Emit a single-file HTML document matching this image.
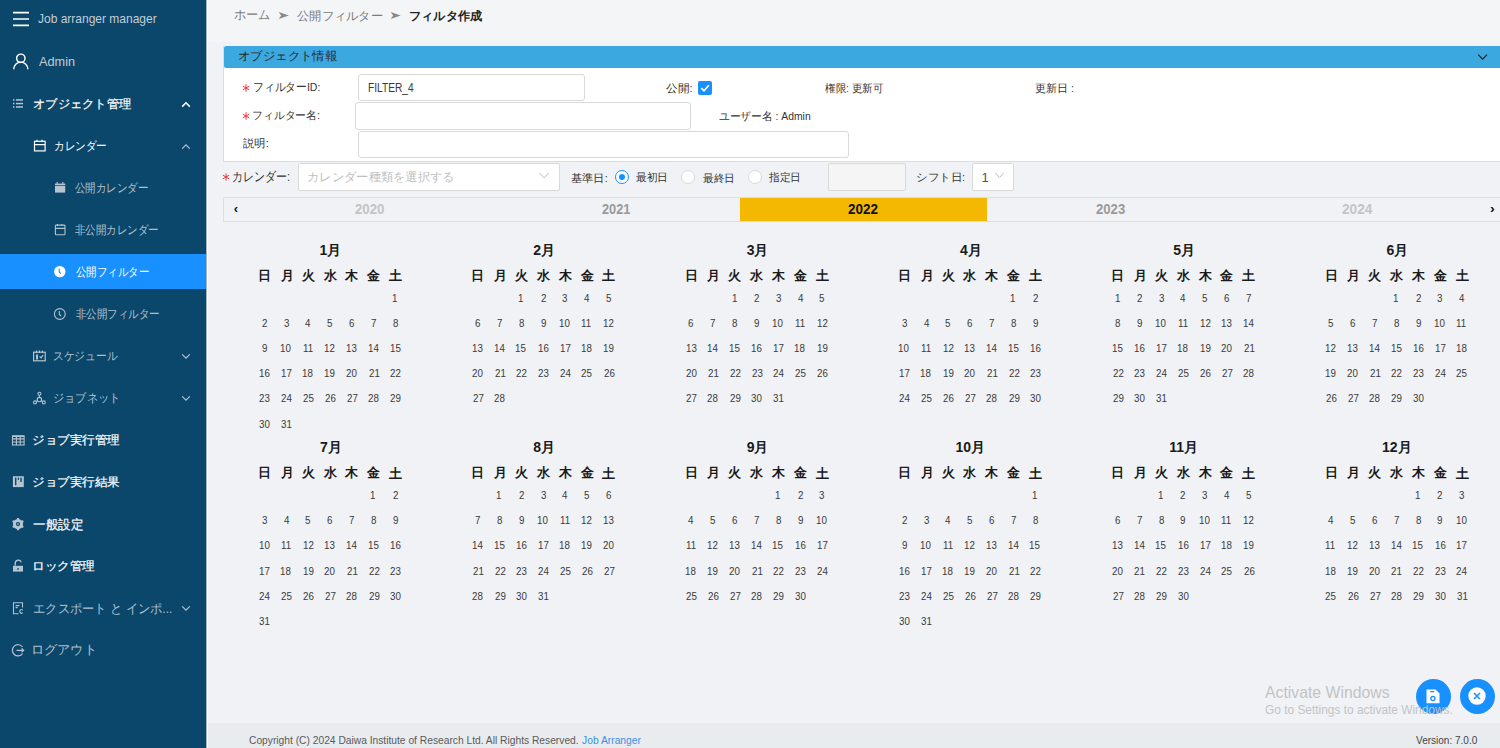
<!DOCTYPE html>
<html><head><meta charset="utf-8"><title>フィルタ作成</title><style>
*{margin:0;padding:0;box-sizing:border-box}
html,body{width:1500px;height:748px;overflow:hidden;background:#f0f2f5;font-family:'Liberation Sans',sans-serif}
.t{position:absolute;line-height:1;white-space:nowrap;transform-origin:0 0}
.b{position:absolute}
svg{position:absolute;overflow:visible}
</style></head>
<body>
<div class=b style="left:0px;top:0px;width:206px;height:748px;background:#0b466b"></div>
<div class=b style="left:206px;top:0px;width:1px;height:748px;background:#9fb3c3"></div>
<div class=b style="left:207px;top:0px;width:1px;height:748px;background:#ffffff"></div>
<div class=b style="left:0px;top:254px;width:206px;height:35px;background:#1890ff"></div>
<div class=b style="left:208px;top:0px;width:1292px;height:42px;background:#f4f5f7"></div>
<div class=b style="left:223px;top:46px;width:1277px;height:116px;background:#fff;border-left:1px solid #dcdcdc;border-bottom:1px solid #dcdcdc"></div>
<div class=b style="left:224px;top:46px;width:1276px;height:22px;background:#3ba8e0;border-radius:2px 0 0 2px"></div>
<div class=b style="left:358px;top:74px;width:227px;height:27px;background:#fff;border:1px solid #d9d9d9;border-radius:3px"></div>
<div class=b style="left:354.5px;top:102px;width:336.0px;height:28px;background:#fff;border:1px solid #d9d9d9;border-radius:3px"></div>
<div class=b style="left:358px;top:130.5px;width:490.5px;height:27.5px;background:#fff;border:1px solid #d9d9d9;border-radius:3px"></div>
<div class=b style="left:698px;top:81px;width:14px;height:14px;background:#1890ff;border-radius:2px"></div>
<div class=b style="left:297.5px;top:163px;width:262.5px;height:27.5px;background:#fff;border:1px solid #d9d9d9;border-radius:2px"></div>
<div class=b style="left:827.5px;top:163px;width:78.5px;height:27.5px;background:#f5f5f5;border:1px solid #d9d9d9;border-radius:2px"></div>
<div class=b style="left:971.5px;top:163px;width:42.5px;height:27.5px;background:#fff;border:1px solid #d9d9d9;border-radius:2px"></div>
<div class=b style="left:614.5px;top:169.5px;width:14.0px;height:14.0px;background:#fff;border:1px solid #1890ff;border-radius:50%"></div>
<div class=b style="left:618.5px;top:173.5px;width:6.0px;height:6.0px;background:#1890ff;border-radius:50%"></div>
<div class=b style="left:681px;top:169.5px;width:14px;height:14.0px;background:#fff;border:1px solid #d9d9d9;border-radius:50%"></div>
<div class=b style="left:747.5px;top:169.5px;width:14.0px;height:14.0px;background:#fff;border:1px solid #d9d9d9;border-radius:50%"></div>
<div class=b style="left:223px;top:197px;width:1277px;height:25px;background:#f0f2f5;border-top:1px solid #dedede;border-bottom:1px solid #dedede;border-left:1px solid #dedede"></div>
<div class=b style="left:740px;top:198px;width:247px;height:23px;background:#f4b800"></div>
<div class=b style="left:208px;top:723px;width:1292px;height:25px;background:#e9ecef"></div>
<div class=b style="left:1415.5px;top:678.5px;width:35.0px;height:35.0px;background:#1890ff;border-radius:50%"></div>
<div class=b style="left:1459.5px;top:678.5px;width:35.0px;height:35.0px;background:#1890ff;border-radius:50%"></div>
<svg style="left:12px;top:10px" width="18" height="18" viewBox="0 0 18 18"><g stroke="#ffffff" stroke-width="1.6"><path d="M1 2.6H17M1 9H17M1 15.4H17"/></g></svg>
<svg style="left:12px;top:52px" width="18" height="18" viewBox="0 0 18 18"><g fill="none" stroke="#ffffff" stroke-width="1.4"><circle cx="8.8" cy="6.3" r="4.2"/><path d="M1.7 17.2A7.1 7.1 0 0 1 15.9 17.2"/></g></svg>
<svg style="left:12px;top:97px" width="14" height="12" viewBox="0 0 14 12"><g fill="#b4c4d1"><rect x="1" y="2.2" width="1.5" height="1.5"/><rect x="1" y="5.8" width="1.5" height="1.5"/><rect x="1" y="9.2" width="1.5" height="1.5"/><rect x="4" y="2.2" width="7" height="1.5"/><rect x="4" y="5.8" width="7" height="1.5"/><rect x="4" y="9.2" width="7" height="1.5"/></g></svg>
<svg style="left:180px;top:100px" width="12" height="9" viewBox="0 0 12 9"><path d="M2.2 6.6L6 2.8L9.8 6.6" fill="none" stroke="#ffffff" stroke-width="1.6"/></svg>
<svg style="left:33px;top:139px" width="14" height="14" viewBox="0 0 14 14"><g fill="none" stroke="#ffffff" stroke-width="1.2"><rect x="1.5" y="2.3" width="10.6" height="9.6"/><path d="M1.5 5.7H12.1M4 0.8V3M9.1 0.8V3"/></g></svg>
<svg style="left:180px;top:142px" width="12" height="9" viewBox="0 0 12 9"><path d="M2.2 6.6L6 2.8L9.8 6.6" fill="none" stroke="#b4c4d1" stroke-width="1.2"/></svg>
<svg style="left:54px;top:181px" width="12" height="13" viewBox="0 0 12 13"><g fill="#b4c4d1"><rect x="1" y="2.6" width="10.2" height="9"/><rect x="2.5" y="1.2" width="1.5" height="1.6"/><rect x="8" y="1.2" width="1.5" height="1.6"/></g><rect x="1" y="4.2" width="10.2" height="0.7" fill="#0b466b"/></svg>
<svg style="left:54px;top:223px" width="12" height="13" viewBox="0 0 12 13"><g fill="none" stroke="#b4c4d1" stroke-width="1.1"><rect x="1.4" y="2.1" width="9.6" height="9.6" rx="0.8"/><path d="M1.4 5.4H11M3.6 0.9V3M7.9 0.9V3"/></g></svg>
<svg style="left:53px;top:265px" width="14" height="14" viewBox="0 0 14 14"><circle cx="6.8" cy="6.6" r="5.7" fill="#ffffff"/><path d="M6.2 3.6V7L8 8.6" fill="none" stroke="#1890ff" stroke-width="1.1"/></svg>
<svg style="left:53px;top:307px" width="14" height="14" viewBox="0 0 14 14"><circle cx="6.8" cy="7" r="5.4" fill="none" stroke="#b4c4d1" stroke-width="1.1"/><path d="M6.3 4V7.4L8.1 9" fill="none" stroke="#b4c4d1" stroke-width="1.1"/></svg>
<svg style="left:32px;top:350px" width="15" height="13" viewBox="0 0 15 13"><g fill="none" stroke="#b4c4d1" stroke-width="1.2"><rect x="1.6" y="2.2" width="11.6" height="8.6"/><path d="M4.5 0.6V3M7.4 0.6V3M10.3 0.6V3M7.6 6.4L9 7.8L11 5.2"/></g><rect x="4" y="4.5" width="2" height="5" fill="#b4c4d1"/></svg>
<svg style="left:32px;top:391px" width="15" height="15" viewBox="0 0 15 15"><g fill="none" stroke="#b4c4d1" stroke-width="1.1"><circle cx="7.4" cy="2.8" r="1.5"/><circle cx="7.4" cy="8.6" r="2.2"/><circle cx="3" cy="11.4" r="1.5"/><circle cx="11.8" cy="11.4" r="1.5"/><path d="M7.4 4.3V6.4M5.5 9.8L4.2 10.6M9.3 9.8L10.6 10.6"/></g></svg>
<svg style="left:180px;top:352px" width="12" height="9" viewBox="0 0 12 9"><path d="M2.2 2.4L6 6.2L9.8 2.4" fill="none" stroke="#b4c4d1" stroke-width="1.2"/></svg>
<svg style="left:180px;top:394px" width="12" height="9" viewBox="0 0 12 9"><path d="M2.2 2.4L6 6.2L9.8 2.4" fill="none" stroke="#b4c4d1" stroke-width="1.2"/></svg>
<svg style="left:180px;top:604px" width="12" height="9" viewBox="0 0 12 9"><path d="M2.2 2.4L6 6.2L9.8 2.4" fill="none" stroke="#b4c4d1" stroke-width="1.2"/></svg>
<svg style="left:11px;top:434px" width="15" height="13" viewBox="0 0 15 13"><g fill="none" stroke="#b4c4d1" stroke-width="1.1"><rect x="1.5" y="1.8" width="11.6" height="9.2"/><path d="M1.5 4.9H13.1M1.5 8H13.1M5.4 1.8V11M9.2 1.8V11"/></g><rect x="1.5" y="1.8" width="11.6" height="1.2" fill="#b4c4d1"/></svg>
<svg style="left:12px;top:475px" width="13" height="13" viewBox="0 0 13 13"><rect x="0.9" y="1.2" width="10.9" height="10.9" fill="#b4c4d1"/><rect x="3" y="2.6" width="1.4" height="7.6" fill="#0b466b"/><rect x="5.8" y="2.6" width="1.2" height="2.4" fill="#0b466b"/><rect x="8.3" y="2.6" width="1.4" height="4.4" fill="#0b466b"/></svg>
<svg style="left:12px;top:518px" width="13" height="13" viewBox="0 0 13 13"><polygon points="6.00,-0.10 6.81,-0.05 7.29,1.27 7.91,1.48 8.50,1.77 9.04,2.13 9.54,2.56 10.92,2.33 11.37,3.00 11.73,3.73 10.83,4.81 10.96,5.45 11.00,6.10 10.96,6.75 10.83,7.39 11.73,8.47 11.37,9.20 10.92,9.87 9.54,9.64 9.04,10.07 8.50,10.43 7.91,10.72 7.29,10.93 6.81,12.25 6.00,12.30 5.19,12.25 4.71,10.93 4.09,10.72 3.50,10.43 2.96,10.07 2.46,9.64 1.08,9.87 0.63,9.20 0.27,8.47 1.17,7.39 1.04,6.75 1.00,6.10 1.04,5.45 1.17,4.81 0.27,3.73 0.63,3.00 1.08,2.33 2.46,2.56 2.96,2.13 3.50,1.77 4.09,1.48 4.71,1.27 5.19,-0.05" fill="#b4c4d1"/><circle cx="6" cy="6.1" r="2.1" fill="#0b466b"/><circle cx="6" cy="6.1" r="0.9" fill="#b4c4d1"/></svg>
<svg style="left:12px;top:559px" width="13" height="14" viewBox="0 0 13 14"><path d="M3.2 6.8V4.2A3.1 3.1 0 0 1 9.2 3.2" fill="none" stroke="#b4c4d1" stroke-width="1.3"/><rect x="1" y="6.8" width="10" height="5.8" fill="#b4c4d1"/><rect x="5.2" y="9.2" width="1.6" height="1.4" fill="#0b466b"/></svg>
<svg style="left:12px;top:601px" width="13" height="15" viewBox="0 0 13 15"><g fill="none" stroke="#b4c4d1" stroke-width="1.1"><path d="M6.5 12.7H1.5V1.8H10.5V6.5"/><path d="M3.6 4.6H7.4M3.6 6.6H5.6"/><path d="M10.8 9.1A1.8 1.8 0 1 0 10.8 11.7"/></g></svg>
<svg style="left:11px;top:643px" width="15" height="15" viewBox="0 0 15 15"><g fill="none" stroke="#b4c4d1" stroke-width="1.2"><path d="M11.5 4A5.6 5.6 0 1 0 11.5 10.6"/><path d="M5.5 7.3H12.5M10.6 5.4L12.6 7.3L10.6 9.2"/></g></svg>
<svg style="left:235.9px;top:77.5px" width="20" height="20" viewBox="0 0 20 20"><path d="M10.00 6.70L10.00 13.30M7.14 8.35L12.86 11.65M7.14 11.65L12.86 8.35" stroke="#f5222d" stroke-width="0.9" stroke-linecap="round"/></svg>
<svg style="left:235.9px;top:105.5px" width="20" height="20" viewBox="0 0 20 20"><path d="M10.00 6.70L10.00 13.30M7.14 8.35L12.86 11.65M7.14 11.65L12.86 8.35" stroke="#f5222d" stroke-width="0.9" stroke-linecap="round"/></svg>
<svg style="left:216.2px;top:167px" width="20" height="20" viewBox="0 0 20 20"><path d="M10.00 6.70L10.00 13.30M7.14 8.35L12.86 11.65M7.14 11.65L12.86 8.35" stroke="#f5222d" stroke-width="0.9" stroke-linecap="round"/></svg>
<svg style="left:1476px;top:52px" width="14" height="10" viewBox="0 0 14 10"><path d="M2.2 2.6L6.6 7.2L11 2.6" fill="none" stroke="#222" stroke-width="1.15"/></svg>
<svg style="left:698px;top:81px" width="14" height="14" viewBox="0 0 14 14"><path d="M3.3 7.2L6 9.8L10.8 4.3" fill="none" stroke="#fff" stroke-width="1.7"/></svg>
<svg style="left:538px;top:171px" width="13" height="10" viewBox="0 0 13 10"><path d="M1.6 2L6.1 7L10.6 2" fill="none" stroke="#bfbfbf" stroke-width="1"/></svg>
<svg style="left:994px;top:171px" width="12" height="10" viewBox="0 0 12 10"><path d="M1.5 2L5.5 6.7L9.5 2" fill="none" stroke="#bfbfbf" stroke-width="1"/></svg>
<svg style="left:1424px;top:688px" width="18" height="17" viewBox="0 0 18 17"><path d="M2.5 1.5H11.5L15.5 5.5V15.2H2.5Z" fill="#fff"/><rect x="6.2" y="3" width="4" height="1.3" fill="#1890ff"/><circle cx="8.9" cy="10.6" r="2.1" fill="none" stroke="#1890ff" stroke-width="1.3"/></svg>
<svg style="left:1466px;top:685px" width="22" height="22" viewBox="0 0 22 22"><circle cx="11" cy="11" r="8.7" fill="#fff"/><path d="M8 8L14 14M14 8L8 14" stroke="#1890ff" stroke-width="1.5"/></svg>
<div class=t style="left:38.40px;top:12.45px;font-size:13px;font-weight:400;color:#c3cdd6;transform:scaleX(0.9225);">Job arranger manager</div>
<div class=t style="left:38.80px;top:55.00px;font-size:13px;font-weight:400;color:#c3cdd6;transform:scaleX(0.9778);">Admin</div>
<div class=t style="left:32.68px;top:98.00px;font-size:12.49px;font-weight:400;color:#ffffff;transform:scaleX(1.0242);-webkit-text-stroke:0.2px #fff;">オブジェクト管理</div>
<div class=t style="left:54.02px;top:141.00px;font-size:11.96px;font-weight:400;color:#ffffff;transform:scaleX(0.8810);">カレンダー</div>
<div class=t style="left:75.40px;top:183.00px;font-size:11.5px;font-weight:400;color:rgba(255,255,255,0.68);transform:scaleX(0.8747);">公開カレンダー</div>
<div class=t style="left:75.40px;top:224.50px;font-size:11.5px;font-weight:400;color:rgba(255,255,255,0.68);transform:scaleX(0.8747);">非公開カレンダー</div>
<div class=t style="left:75.80px;top:266.85px;font-size:11.5px;font-weight:400;color:#ffffff;transform:scaleX(0.8699);">公開フィルター</div>
<div class=t style="left:75.80px;top:309.00px;font-size:11.5px;font-weight:400;color:rgba(255,255,255,0.68);transform:scaleX(0.8737);">非公開フィルター</div>
<div class=t style="left:53.11px;top:349.50px;font-size:12.4px;font-weight:400;color:rgba(255,255,255,0.68);transform:scaleX(0.8944);">スケジュール</div>
<div class=t style="left:52.83px;top:393.20px;font-size:11.96px;font-weight:400;color:rgba(255,255,255,0.68);transform:scaleX(0.9373);">ジョブネット</div>
<div class=t style="left:31.61px;top:435.30px;font-size:11.96px;font-weight:400;color:#ffffff;transform:scaleX(1.0427);-webkit-text-stroke:0.2px #fff;">ジョブ実行管理</div>
<div class=t style="left:31.61px;top:476.00px;font-size:12.49px;font-weight:400;color:#ffffff;transform:scaleX(1.0427);-webkit-text-stroke:0.2px #fff;">ジョブ実行結果</div>
<div class=t style="left:32.73px;top:519.05px;font-size:12.54px;font-weight:400;color:#ffffff;transform:scaleX(0.9660);-webkit-text-stroke:0.2px #fff;">一般設定</div>
<div class=t style="left:31.60px;top:560.25px;font-size:12.23px;font-weight:400;color:#ffffff;transform:scaleX(1.0500);-webkit-text-stroke:0.2px #fff;">ロック管理</div>
<div class=t style="left:32.76px;top:602.60px;font-size:12.89px;font-weight:400;color:rgba(255,255,255,0.68);transform:scaleX(0.9432);">エクスポート と インポ...</div>
<div class=t style="left:31.38px;top:644.40px;font-size:12.56px;font-weight:400;color:rgba(255,255,255,0.68);transform:scaleX(1.0100);">ログアウト</div>
<div class=t style="left:234.20px;top:9.25px;font-size:12.58px;font-weight:400;color:#7b7b7b;transform:scaleX(0.9421);">ホーム</div>
<div class=t style="left:277.26px;top:10.45px;font-size:11px;font-weight:400;color:#8a8a8a;transform:scaleX(1.3375);">➤</div>
<div class=t style="left:297.00px;top:10.80px;font-size:11.96px;font-weight:400;color:#7b7b7b;transform:scaleX(1.0241);">公開フィルター</div>
<div class=t style="left:389.48px;top:10.45px;font-size:11px;font-weight:400;color:#8a8a8a;transform:scaleX(1.3250);">➤</div>
<div class=t style="left:408.99px;top:10.80px;font-size:11.96px;font-weight:700;color:#222;transform:scaleX(1.0141);">フィルタ作成</div>
<div class=t style="left:237.57px;top:51.25px;font-size:11.96px;font-weight:400;color:#2a2a2a;transform:scaleX(1.0330);">オブジェクト情報</div>
<div class=t style="left:252.50px;top:81.10px;font-size:11.67px;font-weight:400;color:#333;transform:scaleX(0.8986);">フィルターID:</div>
<div class=t style="left:252.41px;top:110.10px;font-size:11.17px;font-weight:400;color:#333;transform:scaleX(0.9866);">フィルター名:</div>
<div class=t style="left:243.00px;top:137.70px;font-size:11.04px;font-weight:400;color:#333;transform:scaleX(1.0333);">説明:</div>
<div class=t style="left:367.75px;top:82.20px;font-size:12px;font-weight:400;color:#3a3a3a;transform:scaleX(0.8491);">FILTER_4</div>
<div class=t style="left:666.00px;top:82.85px;font-size:10.58px;font-weight:400;color:#333;transform:scaleX(1.0625);">公開:</div>
<div class=t style="left:824.70px;top:83.20px;font-size:10.58px;font-weight:400;color:#333;transform:scaleX(0.9550);">権限: 更新可</div>
<div class=t style="left:1035.00px;top:83.00px;font-size:10.58px;font-weight:400;color:#333;">更新日 :</div>
<div class=t style="left:718.70px;top:110.90px;font-size:10.6px;font-weight:400;color:#333;transform:scaleX(0.9766);">ユーザー名 : Admin</div>
<div class=t style="left:232.15px;top:171.25px;font-size:12.73px;font-weight:400;color:#333;transform:scaleX(0.8463);">カレンダー:</div>
<div class=t style="left:306.97px;top:171.15px;font-size:12.42px;font-weight:400;color:#bfbfbf;transform:scaleX(1.0254);">カレンダー種類を選択する</div>
<div class=t style="left:571.28px;top:172.50px;font-size:10.58px;font-weight:400;color:#333;transform:scaleX(1.0206);">基準日:</div>
<div class=t style="left:636.00px;top:172.10px;font-size:10.58px;font-weight:400;color:#333;transform:scaleX(0.9677);">最初日</div>
<div class=t style="left:702.70px;top:172.60px;font-size:10.58px;font-weight:400;color:#333;transform:scaleX(0.9677);">最終日</div>
<div class=t style="left:769.40px;top:172.10px;font-size:10.58px;font-weight:400;color:#333;transform:scaleX(0.9710);">指定日</div>
<div class=t style="left:916.25px;top:172.25px;font-size:10.58px;font-weight:400;color:#333;transform:scaleX(1.0467);">シフト日:</div>
<div class=t style="left:981.60px;top:170.75px;font-size:13px;font-weight:400;color:#555;">1</div>
<div class=t style="left:233.70px;top:201.50px;font-size:13px;font-weight:700;color:#111;">‹</div>
<div class=t style="left:355.00px;top:202.00px;font-size:14px;font-weight:700;color:#c4c4c4;transform:scaleX(0.9452);">2020</div>
<div class=t style="left:602.30px;top:202.00px;font-size:14px;font-weight:700;color:#9a9a9a;transform:scaleX(0.9097);">2021</div>
<div class=t style="left:848.40px;top:202.00px;font-size:14px;font-weight:700;color:#111;transform:scaleX(0.9613);">2022</div>
<div class=t style="left:1095.50px;top:202.00px;font-size:14px;font-weight:700;color:#9a9a9a;transform:scaleX(0.9387);">2023</div>
<div class=t style="left:1342.00px;top:202.00px;font-size:14px;font-weight:700;color:#c4c4c4;transform:scaleX(0.9742);">2024</div>
<div class=t style="left:1489.60px;top:202.05px;font-size:13px;font-weight:700;color:#111;transform:scaleX(1.1000);">›</div>
<div class=t style="left:249.30px;top:734.80px;font-size:11px;font-weight:400;color:#5a5a5a;transform:scaleX(0.9312);">Copyright (C) 2024 Daiwa Institute of Research Ltd. All Rights Reserved.</div>
<div class=t style="left:581.70px;top:734.80px;font-size:11px;font-weight:400;color:#3d8fe0;transform:scaleX(0.9365);">Job Arranger</div>
<div class=t style="left:1416.00px;top:735.20px;font-size:11px;font-weight:400;color:#444;transform:scaleX(0.9104);">Version: 7.0.0</div>
<div class=t style="left:1265.30px;top:685.20px;font-size:16px;font-weight:400;color:#c3c3c5;transform:scaleX(0.9865);">Activate Windows</div>
<div class=t style="left:1265.30px;top:703.85px;font-size:12px;font-weight:400;color:#c3c3c5;transform:scaleX(0.9915);">Go to Settings to activate Windows.</div>
<div class=t style="left:319.55px;top:243.10px;font-size:14px;font-weight:700;color:#1a1a1a;">1月</div>
<div class=t style="left:258.06px;top:268.70px;font-size:13px;font-weight:700;color:#1a1a1a;">日</div>
<div class=t style="left:280.89px;top:268.70px;font-size:13px;font-weight:700;color:#1a1a1a;">月</div>
<div class=t style="left:301.72px;top:268.70px;font-size:13px;font-weight:700;color:#1a1a1a;">火</div>
<div class=t style="left:323.55px;top:268.70px;font-size:13px;font-weight:700;color:#1a1a1a;">水</div>
<div class=t style="left:345.38px;top:268.70px;font-size:13px;font-weight:700;color:#1a1a1a;">木</div>
<div class=t style="left:367.21px;top:268.70px;font-size:13px;font-weight:700;color:#1a1a1a;">金</div>
<div class=t style="left:389.04px;top:269.20px;font-size:13px;font-weight:700;color:#1a1a1a;">土</div>
<div class=t style="left:392.29px;top:292.50px;font-size:10.5px;font-weight:400;color:#3a3a3a;transform:scaleX(0.93);">1</div>
<div class=t style="left:261.77px;top:317.70px;font-size:10.5px;font-weight:400;color:#3a3a3a;transform:scaleX(0.93);">2</div>
<div class=t style="left:283.60px;top:317.70px;font-size:10.5px;font-weight:400;color:#3a3a3a;transform:scaleX(0.93);">3</div>
<div class=t style="left:305.43px;top:317.70px;font-size:10.5px;font-weight:400;color:#3a3a3a;transform:scaleX(0.93);">4</div>
<div class=t style="left:327.26px;top:317.70px;font-size:10.5px;font-weight:400;color:#3a3a3a;transform:scaleX(0.93);">5</div>
<div class=t style="left:349.09px;top:317.70px;font-size:10.5px;font-weight:400;color:#3a3a3a;transform:scaleX(0.93);">6</div>
<div class=t style="left:370.92px;top:317.70px;font-size:10.5px;font-weight:400;color:#3a3a3a;transform:scaleX(0.93);">7</div>
<div class=t style="left:392.75px;top:317.70px;font-size:10.5px;font-weight:400;color:#3a3a3a;transform:scaleX(0.93);">8</div>
<div class=t style="left:261.77px;top:342.90px;font-size:10.5px;font-weight:400;color:#3a3a3a;transform:scaleX(0.93);">9</div>
<div class=t style="left:280.34px;top:342.90px;font-size:10.5px;font-weight:400;color:#3a3a3a;transform:scaleX(0.93);">10</div>
<div class=t style="left:302.64px;top:342.90px;font-size:10.5px;font-weight:400;color:#3a3a3a;transform:scaleX(0.93);">11</div>
<div class=t style="left:324.47px;top:342.90px;font-size:10.5px;font-weight:400;color:#3a3a3a;transform:scaleX(0.93);">12</div>
<div class=t style="left:346.30px;top:342.90px;font-size:10.5px;font-weight:400;color:#3a3a3a;transform:scaleX(0.93);">13</div>
<div class=t style="left:367.67px;top:342.90px;font-size:10.5px;font-weight:400;color:#3a3a3a;transform:scaleX(0.93);">14</div>
<div class=t style="left:389.50px;top:342.90px;font-size:10.5px;font-weight:400;color:#3a3a3a;transform:scaleX(0.93);">15</div>
<div class=t style="left:258.98px;top:368.10px;font-size:10.5px;font-weight:400;color:#3a3a3a;transform:scaleX(0.93);">16</div>
<div class=t style="left:280.81px;top:368.10px;font-size:10.5px;font-weight:400;color:#3a3a3a;transform:scaleX(0.93);">17</div>
<div class=t style="left:302.18px;top:368.10px;font-size:10.5px;font-weight:400;color:#3a3a3a;transform:scaleX(0.93);">18</div>
<div class=t style="left:324.47px;top:368.10px;font-size:10.5px;font-weight:400;color:#3a3a3a;transform:scaleX(0.93);">19</div>
<div class=t style="left:346.30px;top:368.10px;font-size:10.5px;font-weight:400;color:#3a3a3a;transform:scaleX(0.93);">20</div>
<div class=t style="left:368.60px;top:368.10px;font-size:10.5px;font-weight:400;color:#3a3a3a;transform:scaleX(0.93);">21</div>
<div class=t style="left:390.43px;top:368.10px;font-size:10.5px;font-weight:400;color:#3a3a3a;transform:scaleX(0.93);">22</div>
<div class=t style="left:259.44px;top:393.30px;font-size:10.5px;font-weight:400;color:#3a3a3a;transform:scaleX(0.93);">23</div>
<div class=t style="left:280.81px;top:393.30px;font-size:10.5px;font-weight:400;color:#3a3a3a;transform:scaleX(0.93);">24</div>
<div class=t style="left:302.64px;top:393.30px;font-size:10.5px;font-weight:400;color:#3a3a3a;transform:scaleX(0.93);">25</div>
<div class=t style="left:324.94px;top:393.30px;font-size:10.5px;font-weight:400;color:#3a3a3a;transform:scaleX(0.93);">26</div>
<div class=t style="left:346.76px;top:393.30px;font-size:10.5px;font-weight:400;color:#3a3a3a;transform:scaleX(0.93);">27</div>
<div class=t style="left:368.13px;top:393.30px;font-size:10.5px;font-weight:400;color:#3a3a3a;transform:scaleX(0.93);">28</div>
<div class=t style="left:390.43px;top:393.30px;font-size:10.5px;font-weight:400;color:#3a3a3a;transform:scaleX(0.93);">29</div>
<div class=t style="left:258.98px;top:418.50px;font-size:10.5px;font-weight:400;color:#3a3a3a;transform:scaleX(0.93);">30</div>
<div class=t style="left:281.27px;top:418.50px;font-size:10.5px;font-weight:400;color:#3a3a3a;transform:scaleX(0.93);">31</div>
<div class=t style="left:533.35px;top:243.10px;font-size:14px;font-weight:700;color:#1a1a1a;">2月</div>
<div class=t style="left:471.36px;top:268.70px;font-size:13px;font-weight:700;color:#1a1a1a;">日</div>
<div class=t style="left:494.19px;top:268.70px;font-size:13px;font-weight:700;color:#1a1a1a;">月</div>
<div class=t style="left:515.02px;top:268.70px;font-size:13px;font-weight:700;color:#1a1a1a;">火</div>
<div class=t style="left:536.85px;top:268.70px;font-size:13px;font-weight:700;color:#1a1a1a;">水</div>
<div class=t style="left:558.68px;top:268.70px;font-size:13px;font-weight:700;color:#1a1a1a;">木</div>
<div class=t style="left:580.51px;top:268.70px;font-size:13px;font-weight:700;color:#1a1a1a;">金</div>
<div class=t style="left:602.34px;top:269.20px;font-size:13px;font-weight:700;color:#1a1a1a;">土</div>
<div class=t style="left:518.26px;top:292.50px;font-size:10.5px;font-weight:400;color:#3a3a3a;transform:scaleX(0.93);">1</div>
<div class=t style="left:540.56px;top:292.50px;font-size:10.5px;font-weight:400;color:#3a3a3a;transform:scaleX(0.93);">2</div>
<div class=t style="left:562.39px;top:292.50px;font-size:10.5px;font-weight:400;color:#3a3a3a;transform:scaleX(0.93);">3</div>
<div class=t style="left:584.22px;top:292.50px;font-size:10.5px;font-weight:400;color:#3a3a3a;transform:scaleX(0.93);">4</div>
<div class=t style="left:606.05px;top:292.50px;font-size:10.5px;font-weight:400;color:#3a3a3a;transform:scaleX(0.93);">5</div>
<div class=t style="left:475.07px;top:317.70px;font-size:10.5px;font-weight:400;color:#3a3a3a;transform:scaleX(0.93);">6</div>
<div class=t style="left:496.90px;top:317.70px;font-size:10.5px;font-weight:400;color:#3a3a3a;transform:scaleX(0.93);">7</div>
<div class=t style="left:518.73px;top:317.70px;font-size:10.5px;font-weight:400;color:#3a3a3a;transform:scaleX(0.93);">8</div>
<div class=t style="left:540.56px;top:317.70px;font-size:10.5px;font-weight:400;color:#3a3a3a;transform:scaleX(0.93);">9</div>
<div class=t style="left:559.14px;top:317.70px;font-size:10.5px;font-weight:400;color:#3a3a3a;transform:scaleX(0.93);">10</div>
<div class=t style="left:581.43px;top:317.70px;font-size:10.5px;font-weight:400;color:#3a3a3a;transform:scaleX(0.93);">11</div>
<div class=t style="left:603.26px;top:317.70px;font-size:10.5px;font-weight:400;color:#3a3a3a;transform:scaleX(0.93);">12</div>
<div class=t style="left:472.28px;top:342.90px;font-size:10.5px;font-weight:400;color:#3a3a3a;transform:scaleX(0.93);">13</div>
<div class=t style="left:493.65px;top:342.90px;font-size:10.5px;font-weight:400;color:#3a3a3a;transform:scaleX(0.93);">14</div>
<div class=t style="left:515.48px;top:342.90px;font-size:10.5px;font-weight:400;color:#3a3a3a;transform:scaleX(0.93);">15</div>
<div class=t style="left:537.77px;top:342.90px;font-size:10.5px;font-weight:400;color:#3a3a3a;transform:scaleX(0.93);">16</div>
<div class=t style="left:559.60px;top:342.90px;font-size:10.5px;font-weight:400;color:#3a3a3a;transform:scaleX(0.93);">17</div>
<div class=t style="left:580.97px;top:342.90px;font-size:10.5px;font-weight:400;color:#3a3a3a;transform:scaleX(0.93);">18</div>
<div class=t style="left:603.26px;top:342.90px;font-size:10.5px;font-weight:400;color:#3a3a3a;transform:scaleX(0.93);">19</div>
<div class=t style="left:472.28px;top:368.10px;font-size:10.5px;font-weight:400;color:#3a3a3a;transform:scaleX(0.93);">20</div>
<div class=t style="left:494.58px;top:368.10px;font-size:10.5px;font-weight:400;color:#3a3a3a;transform:scaleX(0.93);">21</div>
<div class=t style="left:516.40px;top:368.10px;font-size:10.5px;font-weight:400;color:#3a3a3a;transform:scaleX(0.93);">22</div>
<div class=t style="left:538.24px;top:368.10px;font-size:10.5px;font-weight:400;color:#3a3a3a;transform:scaleX(0.93);">23</div>
<div class=t style="left:559.60px;top:368.10px;font-size:10.5px;font-weight:400;color:#3a3a3a;transform:scaleX(0.93);">24</div>
<div class=t style="left:581.43px;top:368.10px;font-size:10.5px;font-weight:400;color:#3a3a3a;transform:scaleX(0.93);">25</div>
<div class=t style="left:603.73px;top:368.10px;font-size:10.5px;font-weight:400;color:#3a3a3a;transform:scaleX(0.93);">26</div>
<div class=t style="left:472.75px;top:393.30px;font-size:10.5px;font-weight:400;color:#3a3a3a;transform:scaleX(0.93);">27</div>
<div class=t style="left:494.11px;top:393.30px;font-size:10.5px;font-weight:400;color:#3a3a3a;transform:scaleX(0.93);">28</div>
<div class=t style="left:746.65px;top:243.10px;font-size:14px;font-weight:700;color:#1a1a1a;">3月</div>
<div class=t style="left:684.66px;top:268.70px;font-size:13px;font-weight:700;color:#1a1a1a;">日</div>
<div class=t style="left:707.49px;top:268.70px;font-size:13px;font-weight:700;color:#1a1a1a;">月</div>
<div class=t style="left:728.32px;top:268.70px;font-size:13px;font-weight:700;color:#1a1a1a;">火</div>
<div class=t style="left:750.15px;top:268.70px;font-size:13px;font-weight:700;color:#1a1a1a;">水</div>
<div class=t style="left:771.98px;top:268.70px;font-size:13px;font-weight:700;color:#1a1a1a;">木</div>
<div class=t style="left:793.81px;top:268.70px;font-size:13px;font-weight:700;color:#1a1a1a;">金</div>
<div class=t style="left:815.64px;top:269.20px;font-size:13px;font-weight:700;color:#1a1a1a;">土</div>
<div class=t style="left:731.56px;top:292.50px;font-size:10.5px;font-weight:400;color:#3a3a3a;transform:scaleX(0.93);">1</div>
<div class=t style="left:753.86px;top:292.50px;font-size:10.5px;font-weight:400;color:#3a3a3a;transform:scaleX(0.93);">2</div>
<div class=t style="left:775.69px;top:292.50px;font-size:10.5px;font-weight:400;color:#3a3a3a;transform:scaleX(0.93);">3</div>
<div class=t style="left:797.52px;top:292.50px;font-size:10.5px;font-weight:400;color:#3a3a3a;transform:scaleX(0.93);">4</div>
<div class=t style="left:819.35px;top:292.50px;font-size:10.5px;font-weight:400;color:#3a3a3a;transform:scaleX(0.93);">5</div>
<div class=t style="left:688.37px;top:317.70px;font-size:10.5px;font-weight:400;color:#3a3a3a;transform:scaleX(0.93);">6</div>
<div class=t style="left:710.20px;top:317.70px;font-size:10.5px;font-weight:400;color:#3a3a3a;transform:scaleX(0.93);">7</div>
<div class=t style="left:732.03px;top:317.70px;font-size:10.5px;font-weight:400;color:#3a3a3a;transform:scaleX(0.93);">8</div>
<div class=t style="left:753.86px;top:317.70px;font-size:10.5px;font-weight:400;color:#3a3a3a;transform:scaleX(0.93);">9</div>
<div class=t style="left:772.44px;top:317.70px;font-size:10.5px;font-weight:400;color:#3a3a3a;transform:scaleX(0.93);">10</div>
<div class=t style="left:794.73px;top:317.70px;font-size:10.5px;font-weight:400;color:#3a3a3a;transform:scaleX(0.93);">11</div>
<div class=t style="left:816.56px;top:317.70px;font-size:10.5px;font-weight:400;color:#3a3a3a;transform:scaleX(0.93);">12</div>
<div class=t style="left:685.58px;top:342.90px;font-size:10.5px;font-weight:400;color:#3a3a3a;transform:scaleX(0.93);">13</div>
<div class=t style="left:706.95px;top:342.90px;font-size:10.5px;font-weight:400;color:#3a3a3a;transform:scaleX(0.93);">14</div>
<div class=t style="left:728.77px;top:342.90px;font-size:10.5px;font-weight:400;color:#3a3a3a;transform:scaleX(0.93);">15</div>
<div class=t style="left:751.07px;top:342.90px;font-size:10.5px;font-weight:400;color:#3a3a3a;transform:scaleX(0.93);">16</div>
<div class=t style="left:772.90px;top:342.90px;font-size:10.5px;font-weight:400;color:#3a3a3a;transform:scaleX(0.93);">17</div>
<div class=t style="left:794.26px;top:342.90px;font-size:10.5px;font-weight:400;color:#3a3a3a;transform:scaleX(0.93);">18</div>
<div class=t style="left:816.56px;top:342.90px;font-size:10.5px;font-weight:400;color:#3a3a3a;transform:scaleX(0.93);">19</div>
<div class=t style="left:685.58px;top:368.10px;font-size:10.5px;font-weight:400;color:#3a3a3a;transform:scaleX(0.93);">20</div>
<div class=t style="left:707.88px;top:368.10px;font-size:10.5px;font-weight:400;color:#3a3a3a;transform:scaleX(0.93);">21</div>
<div class=t style="left:729.70px;top:368.10px;font-size:10.5px;font-weight:400;color:#3a3a3a;transform:scaleX(0.93);">22</div>
<div class=t style="left:751.53px;top:368.10px;font-size:10.5px;font-weight:400;color:#3a3a3a;transform:scaleX(0.93);">23</div>
<div class=t style="left:772.90px;top:368.10px;font-size:10.5px;font-weight:400;color:#3a3a3a;transform:scaleX(0.93);">24</div>
<div class=t style="left:794.73px;top:368.10px;font-size:10.5px;font-weight:400;color:#3a3a3a;transform:scaleX(0.93);">25</div>
<div class=t style="left:817.02px;top:368.10px;font-size:10.5px;font-weight:400;color:#3a3a3a;transform:scaleX(0.93);">26</div>
<div class=t style="left:686.04px;top:393.30px;font-size:10.5px;font-weight:400;color:#3a3a3a;transform:scaleX(0.93);">27</div>
<div class=t style="left:707.41px;top:393.30px;font-size:10.5px;font-weight:400;color:#3a3a3a;transform:scaleX(0.93);">28</div>
<div class=t style="left:729.70px;top:393.30px;font-size:10.5px;font-weight:400;color:#3a3a3a;transform:scaleX(0.93);">29</div>
<div class=t style="left:751.07px;top:393.30px;font-size:10.5px;font-weight:400;color:#3a3a3a;transform:scaleX(0.93);">30</div>
<div class=t style="left:773.37px;top:393.30px;font-size:10.5px;font-weight:400;color:#3a3a3a;transform:scaleX(0.93);">31</div>
<div class=t style="left:959.95px;top:243.10px;font-size:14px;font-weight:700;color:#1a1a1a;">4月</div>
<div class=t style="left:897.96px;top:268.70px;font-size:13px;font-weight:700;color:#1a1a1a;">日</div>
<div class=t style="left:920.79px;top:268.70px;font-size:13px;font-weight:700;color:#1a1a1a;">月</div>
<div class=t style="left:941.62px;top:268.70px;font-size:13px;font-weight:700;color:#1a1a1a;">火</div>
<div class=t style="left:963.45px;top:268.70px;font-size:13px;font-weight:700;color:#1a1a1a;">水</div>
<div class=t style="left:985.28px;top:268.70px;font-size:13px;font-weight:700;color:#1a1a1a;">木</div>
<div class=t style="left:1007.11px;top:268.70px;font-size:13px;font-weight:700;color:#1a1a1a;">金</div>
<div class=t style="left:1028.94px;top:269.20px;font-size:13px;font-weight:700;color:#1a1a1a;">土</div>
<div class=t style="left:1010.36px;top:292.50px;font-size:10.5px;font-weight:400;color:#3a3a3a;transform:scaleX(0.93);">1</div>
<div class=t style="left:1032.65px;top:292.50px;font-size:10.5px;font-weight:400;color:#3a3a3a;transform:scaleX(0.93);">2</div>
<div class=t style="left:901.67px;top:317.70px;font-size:10.5px;font-weight:400;color:#3a3a3a;transform:scaleX(0.93);">3</div>
<div class=t style="left:923.50px;top:317.70px;font-size:10.5px;font-weight:400;color:#3a3a3a;transform:scaleX(0.93);">4</div>
<div class=t style="left:945.33px;top:317.70px;font-size:10.5px;font-weight:400;color:#3a3a3a;transform:scaleX(0.93);">5</div>
<div class=t style="left:967.16px;top:317.70px;font-size:10.5px;font-weight:400;color:#3a3a3a;transform:scaleX(0.93);">6</div>
<div class=t style="left:988.99px;top:317.70px;font-size:10.5px;font-weight:400;color:#3a3a3a;transform:scaleX(0.93);">7</div>
<div class=t style="left:1010.82px;top:317.70px;font-size:10.5px;font-weight:400;color:#3a3a3a;transform:scaleX(0.93);">8</div>
<div class=t style="left:1032.65px;top:317.70px;font-size:10.5px;font-weight:400;color:#3a3a3a;transform:scaleX(0.93);">9</div>
<div class=t style="left:898.42px;top:342.90px;font-size:10.5px;font-weight:400;color:#3a3a3a;transform:scaleX(0.93);">10</div>
<div class=t style="left:920.71px;top:342.90px;font-size:10.5px;font-weight:400;color:#3a3a3a;transform:scaleX(0.93);">11</div>
<div class=t style="left:942.54px;top:342.90px;font-size:10.5px;font-weight:400;color:#3a3a3a;transform:scaleX(0.93);">12</div>
<div class=t style="left:964.37px;top:342.90px;font-size:10.5px;font-weight:400;color:#3a3a3a;transform:scaleX(0.93);">13</div>
<div class=t style="left:985.74px;top:342.90px;font-size:10.5px;font-weight:400;color:#3a3a3a;transform:scaleX(0.93);">14</div>
<div class=t style="left:1007.57px;top:342.90px;font-size:10.5px;font-weight:400;color:#3a3a3a;transform:scaleX(0.93);">15</div>
<div class=t style="left:1029.86px;top:342.90px;font-size:10.5px;font-weight:400;color:#3a3a3a;transform:scaleX(0.93);">16</div>
<div class=t style="left:898.88px;top:368.10px;font-size:10.5px;font-weight:400;color:#3a3a3a;transform:scaleX(0.93);">17</div>
<div class=t style="left:920.25px;top:368.10px;font-size:10.5px;font-weight:400;color:#3a3a3a;transform:scaleX(0.93);">18</div>
<div class=t style="left:942.54px;top:368.10px;font-size:10.5px;font-weight:400;color:#3a3a3a;transform:scaleX(0.93);">19</div>
<div class=t style="left:964.37px;top:368.10px;font-size:10.5px;font-weight:400;color:#3a3a3a;transform:scaleX(0.93);">20</div>
<div class=t style="left:986.67px;top:368.10px;font-size:10.5px;font-weight:400;color:#3a3a3a;transform:scaleX(0.93);">21</div>
<div class=t style="left:1008.50px;top:368.10px;font-size:10.5px;font-weight:400;color:#3a3a3a;transform:scaleX(0.93);">22</div>
<div class=t style="left:1030.33px;top:368.10px;font-size:10.5px;font-weight:400;color:#3a3a3a;transform:scaleX(0.93);">23</div>
<div class=t style="left:898.88px;top:393.30px;font-size:10.5px;font-weight:400;color:#3a3a3a;transform:scaleX(0.93);">24</div>
<div class=t style="left:920.71px;top:393.30px;font-size:10.5px;font-weight:400;color:#3a3a3a;transform:scaleX(0.93);">25</div>
<div class=t style="left:943.00px;top:393.30px;font-size:10.5px;font-weight:400;color:#3a3a3a;transform:scaleX(0.93);">26</div>
<div class=t style="left:964.84px;top:393.30px;font-size:10.5px;font-weight:400;color:#3a3a3a;transform:scaleX(0.93);">27</div>
<div class=t style="left:986.20px;top:393.30px;font-size:10.5px;font-weight:400;color:#3a3a3a;transform:scaleX(0.93);">28</div>
<div class=t style="left:1008.50px;top:393.30px;font-size:10.5px;font-weight:400;color:#3a3a3a;transform:scaleX(0.93);">29</div>
<div class=t style="left:1029.86px;top:393.30px;font-size:10.5px;font-weight:400;color:#3a3a3a;transform:scaleX(0.93);">30</div>
<div class=t style="left:1173.25px;top:243.10px;font-size:14px;font-weight:700;color:#1a1a1a;">5月</div>
<div class=t style="left:1111.26px;top:268.70px;font-size:13px;font-weight:700;color:#1a1a1a;">日</div>
<div class=t style="left:1134.09px;top:268.70px;font-size:13px;font-weight:700;color:#1a1a1a;">月</div>
<div class=t style="left:1154.92px;top:268.70px;font-size:13px;font-weight:700;color:#1a1a1a;">火</div>
<div class=t style="left:1176.75px;top:268.70px;font-size:13px;font-weight:700;color:#1a1a1a;">水</div>
<div class=t style="left:1198.58px;top:268.70px;font-size:13px;font-weight:700;color:#1a1a1a;">木</div>
<div class=t style="left:1220.41px;top:268.70px;font-size:13px;font-weight:700;color:#1a1a1a;">金</div>
<div class=t style="left:1242.24px;top:269.20px;font-size:13px;font-weight:700;color:#1a1a1a;">土</div>
<div class=t style="left:1114.51px;top:292.50px;font-size:10.5px;font-weight:400;color:#3a3a3a;transform:scaleX(0.93);">1</div>
<div class=t style="left:1136.80px;top:292.50px;font-size:10.5px;font-weight:400;color:#3a3a3a;transform:scaleX(0.93);">2</div>
<div class=t style="left:1158.63px;top:292.50px;font-size:10.5px;font-weight:400;color:#3a3a3a;transform:scaleX(0.93);">3</div>
<div class=t style="left:1180.46px;top:292.50px;font-size:10.5px;font-weight:400;color:#3a3a3a;transform:scaleX(0.93);">4</div>
<div class=t style="left:1202.29px;top:292.50px;font-size:10.5px;font-weight:400;color:#3a3a3a;transform:scaleX(0.93);">5</div>
<div class=t style="left:1224.12px;top:292.50px;font-size:10.5px;font-weight:400;color:#3a3a3a;transform:scaleX(0.93);">6</div>
<div class=t style="left:1245.95px;top:292.50px;font-size:10.5px;font-weight:400;color:#3a3a3a;transform:scaleX(0.93);">7</div>
<div class=t style="left:1114.97px;top:317.70px;font-size:10.5px;font-weight:400;color:#3a3a3a;transform:scaleX(0.93);">8</div>
<div class=t style="left:1136.80px;top:317.70px;font-size:10.5px;font-weight:400;color:#3a3a3a;transform:scaleX(0.93);">9</div>
<div class=t style="left:1155.38px;top:317.70px;font-size:10.5px;font-weight:400;color:#3a3a3a;transform:scaleX(0.93);">10</div>
<div class=t style="left:1177.67px;top:317.70px;font-size:10.5px;font-weight:400;color:#3a3a3a;transform:scaleX(0.93);">11</div>
<div class=t style="left:1199.50px;top:317.70px;font-size:10.5px;font-weight:400;color:#3a3a3a;transform:scaleX(0.93);">12</div>
<div class=t style="left:1221.33px;top:317.70px;font-size:10.5px;font-weight:400;color:#3a3a3a;transform:scaleX(0.93);">13</div>
<div class=t style="left:1242.70px;top:317.70px;font-size:10.5px;font-weight:400;color:#3a3a3a;transform:scaleX(0.93);">14</div>
<div class=t style="left:1111.72px;top:342.90px;font-size:10.5px;font-weight:400;color:#3a3a3a;transform:scaleX(0.93);">15</div>
<div class=t style="left:1134.01px;top:342.90px;font-size:10.5px;font-weight:400;color:#3a3a3a;transform:scaleX(0.93);">16</div>
<div class=t style="left:1155.84px;top:342.90px;font-size:10.5px;font-weight:400;color:#3a3a3a;transform:scaleX(0.93);">17</div>
<div class=t style="left:1177.21px;top:342.90px;font-size:10.5px;font-weight:400;color:#3a3a3a;transform:scaleX(0.93);">18</div>
<div class=t style="left:1199.50px;top:342.90px;font-size:10.5px;font-weight:400;color:#3a3a3a;transform:scaleX(0.93);">19</div>
<div class=t style="left:1221.33px;top:342.90px;font-size:10.5px;font-weight:400;color:#3a3a3a;transform:scaleX(0.93);">20</div>
<div class=t style="left:1243.63px;top:342.90px;font-size:10.5px;font-weight:400;color:#3a3a3a;transform:scaleX(0.93);">21</div>
<div class=t style="left:1112.65px;top:368.10px;font-size:10.5px;font-weight:400;color:#3a3a3a;transform:scaleX(0.93);">22</div>
<div class=t style="left:1134.48px;top:368.10px;font-size:10.5px;font-weight:400;color:#3a3a3a;transform:scaleX(0.93);">23</div>
<div class=t style="left:1155.84px;top:368.10px;font-size:10.5px;font-weight:400;color:#3a3a3a;transform:scaleX(0.93);">24</div>
<div class=t style="left:1177.67px;top:368.10px;font-size:10.5px;font-weight:400;color:#3a3a3a;transform:scaleX(0.93);">25</div>
<div class=t style="left:1199.97px;top:368.10px;font-size:10.5px;font-weight:400;color:#3a3a3a;transform:scaleX(0.93);">26</div>
<div class=t style="left:1221.80px;top:368.10px;font-size:10.5px;font-weight:400;color:#3a3a3a;transform:scaleX(0.93);">27</div>
<div class=t style="left:1243.16px;top:368.10px;font-size:10.5px;font-weight:400;color:#3a3a3a;transform:scaleX(0.93);">28</div>
<div class=t style="left:1112.65px;top:393.30px;font-size:10.5px;font-weight:400;color:#3a3a3a;transform:scaleX(0.93);">29</div>
<div class=t style="left:1134.01px;top:393.30px;font-size:10.5px;font-weight:400;color:#3a3a3a;transform:scaleX(0.93);">30</div>
<div class=t style="left:1156.31px;top:393.30px;font-size:10.5px;font-weight:400;color:#3a3a3a;transform:scaleX(0.93);">31</div>
<div class=t style="left:1386.55px;top:243.10px;font-size:14px;font-weight:700;color:#1a1a1a;">6月</div>
<div class=t style="left:1324.56px;top:268.70px;font-size:13px;font-weight:700;color:#1a1a1a;">日</div>
<div class=t style="left:1347.39px;top:268.70px;font-size:13px;font-weight:700;color:#1a1a1a;">月</div>
<div class=t style="left:1368.22px;top:268.70px;font-size:13px;font-weight:700;color:#1a1a1a;">火</div>
<div class=t style="left:1390.05px;top:268.70px;font-size:13px;font-weight:700;color:#1a1a1a;">水</div>
<div class=t style="left:1411.88px;top:268.70px;font-size:13px;font-weight:700;color:#1a1a1a;">木</div>
<div class=t style="left:1433.71px;top:268.70px;font-size:13px;font-weight:700;color:#1a1a1a;">金</div>
<div class=t style="left:1455.54px;top:269.20px;font-size:13px;font-weight:700;color:#1a1a1a;">土</div>
<div class=t style="left:1393.30px;top:292.50px;font-size:10.5px;font-weight:400;color:#3a3a3a;transform:scaleX(0.93);">1</div>
<div class=t style="left:1415.59px;top:292.50px;font-size:10.5px;font-weight:400;color:#3a3a3a;transform:scaleX(0.93);">2</div>
<div class=t style="left:1437.42px;top:292.50px;font-size:10.5px;font-weight:400;color:#3a3a3a;transform:scaleX(0.93);">3</div>
<div class=t style="left:1459.25px;top:292.50px;font-size:10.5px;font-weight:400;color:#3a3a3a;transform:scaleX(0.93);">4</div>
<div class=t style="left:1328.27px;top:317.70px;font-size:10.5px;font-weight:400;color:#3a3a3a;transform:scaleX(0.93);">5</div>
<div class=t style="left:1350.10px;top:317.70px;font-size:10.5px;font-weight:400;color:#3a3a3a;transform:scaleX(0.93);">6</div>
<div class=t style="left:1371.93px;top:317.70px;font-size:10.5px;font-weight:400;color:#3a3a3a;transform:scaleX(0.93);">7</div>
<div class=t style="left:1393.76px;top:317.70px;font-size:10.5px;font-weight:400;color:#3a3a3a;transform:scaleX(0.93);">8</div>
<div class=t style="left:1415.59px;top:317.70px;font-size:10.5px;font-weight:400;color:#3a3a3a;transform:scaleX(0.93);">9</div>
<div class=t style="left:1434.17px;top:317.70px;font-size:10.5px;font-weight:400;color:#3a3a3a;transform:scaleX(0.93);">10</div>
<div class=t style="left:1456.46px;top:317.70px;font-size:10.5px;font-weight:400;color:#3a3a3a;transform:scaleX(0.93);">11</div>
<div class=t style="left:1325.48px;top:342.90px;font-size:10.5px;font-weight:400;color:#3a3a3a;transform:scaleX(0.93);">12</div>
<div class=t style="left:1347.31px;top:342.90px;font-size:10.5px;font-weight:400;color:#3a3a3a;transform:scaleX(0.93);">13</div>
<div class=t style="left:1368.68px;top:342.90px;font-size:10.5px;font-weight:400;color:#3a3a3a;transform:scaleX(0.93);">14</div>
<div class=t style="left:1390.51px;top:342.90px;font-size:10.5px;font-weight:400;color:#3a3a3a;transform:scaleX(0.93);">15</div>
<div class=t style="left:1412.80px;top:342.90px;font-size:10.5px;font-weight:400;color:#3a3a3a;transform:scaleX(0.93);">16</div>
<div class=t style="left:1434.63px;top:342.90px;font-size:10.5px;font-weight:400;color:#3a3a3a;transform:scaleX(0.93);">17</div>
<div class=t style="left:1456.00px;top:342.90px;font-size:10.5px;font-weight:400;color:#3a3a3a;transform:scaleX(0.93);">18</div>
<div class=t style="left:1325.48px;top:368.10px;font-size:10.5px;font-weight:400;color:#3a3a3a;transform:scaleX(0.93);">19</div>
<div class=t style="left:1347.31px;top:368.10px;font-size:10.5px;font-weight:400;color:#3a3a3a;transform:scaleX(0.93);">20</div>
<div class=t style="left:1369.61px;top:368.10px;font-size:10.5px;font-weight:400;color:#3a3a3a;transform:scaleX(0.93);">21</div>
<div class=t style="left:1391.44px;top:368.10px;font-size:10.5px;font-weight:400;color:#3a3a3a;transform:scaleX(0.93);">22</div>
<div class=t style="left:1413.27px;top:368.10px;font-size:10.5px;font-weight:400;color:#3a3a3a;transform:scaleX(0.93);">23</div>
<div class=t style="left:1434.63px;top:368.10px;font-size:10.5px;font-weight:400;color:#3a3a3a;transform:scaleX(0.93);">24</div>
<div class=t style="left:1456.46px;top:368.10px;font-size:10.5px;font-weight:400;color:#3a3a3a;transform:scaleX(0.93);">25</div>
<div class=t style="left:1325.95px;top:393.30px;font-size:10.5px;font-weight:400;color:#3a3a3a;transform:scaleX(0.93);">26</div>
<div class=t style="left:1347.78px;top:393.30px;font-size:10.5px;font-weight:400;color:#3a3a3a;transform:scaleX(0.93);">27</div>
<div class=t style="left:1369.14px;top:393.30px;font-size:10.5px;font-weight:400;color:#3a3a3a;transform:scaleX(0.93);">28</div>
<div class=t style="left:1391.44px;top:393.30px;font-size:10.5px;font-weight:400;color:#3a3a3a;transform:scaleX(0.93);">29</div>
<div class=t style="left:1412.80px;top:393.30px;font-size:10.5px;font-weight:400;color:#3a3a3a;transform:scaleX(0.93);">30</div>
<div class=t style="left:320.05px;top:439.90px;font-size:14px;font-weight:700;color:#1a1a1a;">7月</div>
<div class=t style="left:258.06px;top:466.40px;font-size:13px;font-weight:700;color:#1a1a1a;">日</div>
<div class=t style="left:280.89px;top:466.40px;font-size:13px;font-weight:700;color:#1a1a1a;">月</div>
<div class=t style="left:301.72px;top:466.40px;font-size:13px;font-weight:700;color:#1a1a1a;">火</div>
<div class=t style="left:323.55px;top:466.40px;font-size:13px;font-weight:700;color:#1a1a1a;">水</div>
<div class=t style="left:345.38px;top:466.40px;font-size:13px;font-weight:700;color:#1a1a1a;">木</div>
<div class=t style="left:367.21px;top:466.40px;font-size:13px;font-weight:700;color:#1a1a1a;">金</div>
<div class=t style="left:389.04px;top:466.90px;font-size:13px;font-weight:700;color:#1a1a1a;">土</div>
<div class=t style="left:370.46px;top:489.60px;font-size:10.5px;font-weight:400;color:#3a3a3a;transform:scaleX(0.93);">1</div>
<div class=t style="left:392.75px;top:489.60px;font-size:10.5px;font-weight:400;color:#3a3a3a;transform:scaleX(0.93);">2</div>
<div class=t style="left:261.77px;top:514.90px;font-size:10.5px;font-weight:400;color:#3a3a3a;transform:scaleX(0.93);">3</div>
<div class=t style="left:283.60px;top:514.90px;font-size:10.5px;font-weight:400;color:#3a3a3a;transform:scaleX(0.93);">4</div>
<div class=t style="left:305.43px;top:514.90px;font-size:10.5px;font-weight:400;color:#3a3a3a;transform:scaleX(0.93);">5</div>
<div class=t style="left:327.26px;top:514.90px;font-size:10.5px;font-weight:400;color:#3a3a3a;transform:scaleX(0.93);">6</div>
<div class=t style="left:349.09px;top:514.90px;font-size:10.5px;font-weight:400;color:#3a3a3a;transform:scaleX(0.93);">7</div>
<div class=t style="left:370.92px;top:514.90px;font-size:10.5px;font-weight:400;color:#3a3a3a;transform:scaleX(0.93);">8</div>
<div class=t style="left:392.75px;top:514.90px;font-size:10.5px;font-weight:400;color:#3a3a3a;transform:scaleX(0.93);">9</div>
<div class=t style="left:258.51px;top:540.20px;font-size:10.5px;font-weight:400;color:#3a3a3a;transform:scaleX(0.93);">10</div>
<div class=t style="left:280.81px;top:540.20px;font-size:10.5px;font-weight:400;color:#3a3a3a;transform:scaleX(0.93);">11</div>
<div class=t style="left:302.64px;top:540.20px;font-size:10.5px;font-weight:400;color:#3a3a3a;transform:scaleX(0.93);">12</div>
<div class=t style="left:324.47px;top:540.20px;font-size:10.5px;font-weight:400;color:#3a3a3a;transform:scaleX(0.93);">13</div>
<div class=t style="left:345.83px;top:540.20px;font-size:10.5px;font-weight:400;color:#3a3a3a;transform:scaleX(0.93);">14</div>
<div class=t style="left:367.67px;top:540.20px;font-size:10.5px;font-weight:400;color:#3a3a3a;transform:scaleX(0.93);">15</div>
<div class=t style="left:389.96px;top:540.20px;font-size:10.5px;font-weight:400;color:#3a3a3a;transform:scaleX(0.93);">16</div>
<div class=t style="left:258.98px;top:565.50px;font-size:10.5px;font-weight:400;color:#3a3a3a;transform:scaleX(0.93);">17</div>
<div class=t style="left:280.34px;top:565.50px;font-size:10.5px;font-weight:400;color:#3a3a3a;transform:scaleX(0.93);">18</div>
<div class=t style="left:302.64px;top:565.50px;font-size:10.5px;font-weight:400;color:#3a3a3a;transform:scaleX(0.93);">19</div>
<div class=t style="left:324.47px;top:565.50px;font-size:10.5px;font-weight:400;color:#3a3a3a;transform:scaleX(0.93);">20</div>
<div class=t style="left:346.76px;top:565.50px;font-size:10.5px;font-weight:400;color:#3a3a3a;transform:scaleX(0.93);">21</div>
<div class=t style="left:368.60px;top:565.50px;font-size:10.5px;font-weight:400;color:#3a3a3a;transform:scaleX(0.93);">22</div>
<div class=t style="left:390.43px;top:565.50px;font-size:10.5px;font-weight:400;color:#3a3a3a;transform:scaleX(0.93);">23</div>
<div class=t style="left:258.98px;top:590.80px;font-size:10.5px;font-weight:400;color:#3a3a3a;transform:scaleX(0.93);">24</div>
<div class=t style="left:280.81px;top:590.80px;font-size:10.5px;font-weight:400;color:#3a3a3a;transform:scaleX(0.93);">25</div>
<div class=t style="left:303.11px;top:590.80px;font-size:10.5px;font-weight:400;color:#3a3a3a;transform:scaleX(0.93);">26</div>
<div class=t style="left:324.94px;top:590.80px;font-size:10.5px;font-weight:400;color:#3a3a3a;transform:scaleX(0.93);">27</div>
<div class=t style="left:346.30px;top:590.80px;font-size:10.5px;font-weight:400;color:#3a3a3a;transform:scaleX(0.93);">28</div>
<div class=t style="left:368.60px;top:590.80px;font-size:10.5px;font-weight:400;color:#3a3a3a;transform:scaleX(0.93);">29</div>
<div class=t style="left:389.96px;top:590.80px;font-size:10.5px;font-weight:400;color:#3a3a3a;transform:scaleX(0.93);">30</div>
<div class=t style="left:259.44px;top:616.10px;font-size:10.5px;font-weight:400;color:#3a3a3a;transform:scaleX(0.93);">31</div>
<div class=t style="left:533.35px;top:439.90px;font-size:14px;font-weight:700;color:#1a1a1a;">8月</div>
<div class=t style="left:471.36px;top:466.40px;font-size:13px;font-weight:700;color:#1a1a1a;">日</div>
<div class=t style="left:494.19px;top:466.40px;font-size:13px;font-weight:700;color:#1a1a1a;">月</div>
<div class=t style="left:515.02px;top:466.40px;font-size:13px;font-weight:700;color:#1a1a1a;">火</div>
<div class=t style="left:536.85px;top:466.40px;font-size:13px;font-weight:700;color:#1a1a1a;">水</div>
<div class=t style="left:558.68px;top:466.40px;font-size:13px;font-weight:700;color:#1a1a1a;">木</div>
<div class=t style="left:580.51px;top:466.40px;font-size:13px;font-weight:700;color:#1a1a1a;">金</div>
<div class=t style="left:602.34px;top:466.90px;font-size:13px;font-weight:700;color:#1a1a1a;">土</div>
<div class=t style="left:496.44px;top:489.60px;font-size:10.5px;font-weight:400;color:#3a3a3a;transform:scaleX(0.93);">1</div>
<div class=t style="left:518.73px;top:489.60px;font-size:10.5px;font-weight:400;color:#3a3a3a;transform:scaleX(0.93);">2</div>
<div class=t style="left:540.56px;top:489.60px;font-size:10.5px;font-weight:400;color:#3a3a3a;transform:scaleX(0.93);">3</div>
<div class=t style="left:562.39px;top:489.60px;font-size:10.5px;font-weight:400;color:#3a3a3a;transform:scaleX(0.93);">4</div>
<div class=t style="left:584.22px;top:489.60px;font-size:10.5px;font-weight:400;color:#3a3a3a;transform:scaleX(0.93);">5</div>
<div class=t style="left:606.05px;top:489.60px;font-size:10.5px;font-weight:400;color:#3a3a3a;transform:scaleX(0.93);">6</div>
<div class=t style="left:475.07px;top:514.90px;font-size:10.5px;font-weight:400;color:#3a3a3a;transform:scaleX(0.93);">7</div>
<div class=t style="left:496.90px;top:514.90px;font-size:10.5px;font-weight:400;color:#3a3a3a;transform:scaleX(0.93);">8</div>
<div class=t style="left:518.73px;top:514.90px;font-size:10.5px;font-weight:400;color:#3a3a3a;transform:scaleX(0.93);">9</div>
<div class=t style="left:537.31px;top:514.90px;font-size:10.5px;font-weight:400;color:#3a3a3a;transform:scaleX(0.93);">10</div>
<div class=t style="left:559.60px;top:514.90px;font-size:10.5px;font-weight:400;color:#3a3a3a;transform:scaleX(0.93);">11</div>
<div class=t style="left:581.43px;top:514.90px;font-size:10.5px;font-weight:400;color:#3a3a3a;transform:scaleX(0.93);">12</div>
<div class=t style="left:603.26px;top:514.90px;font-size:10.5px;font-weight:400;color:#3a3a3a;transform:scaleX(0.93);">13</div>
<div class=t style="left:471.81px;top:540.20px;font-size:10.5px;font-weight:400;color:#3a3a3a;transform:scaleX(0.93);">14</div>
<div class=t style="left:493.65px;top:540.20px;font-size:10.5px;font-weight:400;color:#3a3a3a;transform:scaleX(0.93);">15</div>
<div class=t style="left:515.94px;top:540.20px;font-size:10.5px;font-weight:400;color:#3a3a3a;transform:scaleX(0.93);">16</div>
<div class=t style="left:537.77px;top:540.20px;font-size:10.5px;font-weight:400;color:#3a3a3a;transform:scaleX(0.93);">17</div>
<div class=t style="left:559.14px;top:540.20px;font-size:10.5px;font-weight:400;color:#3a3a3a;transform:scaleX(0.93);">18</div>
<div class=t style="left:581.43px;top:540.20px;font-size:10.5px;font-weight:400;color:#3a3a3a;transform:scaleX(0.93);">19</div>
<div class=t style="left:603.26px;top:540.20px;font-size:10.5px;font-weight:400;color:#3a3a3a;transform:scaleX(0.93);">20</div>
<div class=t style="left:472.75px;top:565.50px;font-size:10.5px;font-weight:400;color:#3a3a3a;transform:scaleX(0.93);">21</div>
<div class=t style="left:494.58px;top:565.50px;font-size:10.5px;font-weight:400;color:#3a3a3a;transform:scaleX(0.93);">22</div>
<div class=t style="left:516.40px;top:565.50px;font-size:10.5px;font-weight:400;color:#3a3a3a;transform:scaleX(0.93);">23</div>
<div class=t style="left:537.77px;top:565.50px;font-size:10.5px;font-weight:400;color:#3a3a3a;transform:scaleX(0.93);">24</div>
<div class=t style="left:559.60px;top:565.50px;font-size:10.5px;font-weight:400;color:#3a3a3a;transform:scaleX(0.93);">25</div>
<div class=t style="left:581.89px;top:565.50px;font-size:10.5px;font-weight:400;color:#3a3a3a;transform:scaleX(0.93);">26</div>
<div class=t style="left:603.73px;top:565.50px;font-size:10.5px;font-weight:400;color:#3a3a3a;transform:scaleX(0.93);">27</div>
<div class=t style="left:472.28px;top:590.80px;font-size:10.5px;font-weight:400;color:#3a3a3a;transform:scaleX(0.93);">28</div>
<div class=t style="left:494.58px;top:590.80px;font-size:10.5px;font-weight:400;color:#3a3a3a;transform:scaleX(0.93);">29</div>
<div class=t style="left:515.94px;top:590.80px;font-size:10.5px;font-weight:400;color:#3a3a3a;transform:scaleX(0.93);">30</div>
<div class=t style="left:538.24px;top:590.80px;font-size:10.5px;font-weight:400;color:#3a3a3a;transform:scaleX(0.93);">31</div>
<div class=t style="left:746.65px;top:439.90px;font-size:14px;font-weight:700;color:#1a1a1a;">9月</div>
<div class=t style="left:684.66px;top:466.40px;font-size:13px;font-weight:700;color:#1a1a1a;">日</div>
<div class=t style="left:707.49px;top:466.40px;font-size:13px;font-weight:700;color:#1a1a1a;">月</div>
<div class=t style="left:728.32px;top:466.40px;font-size:13px;font-weight:700;color:#1a1a1a;">火</div>
<div class=t style="left:750.15px;top:466.40px;font-size:13px;font-weight:700;color:#1a1a1a;">水</div>
<div class=t style="left:771.98px;top:466.40px;font-size:13px;font-weight:700;color:#1a1a1a;">木</div>
<div class=t style="left:793.81px;top:466.40px;font-size:13px;font-weight:700;color:#1a1a1a;">金</div>
<div class=t style="left:815.64px;top:466.90px;font-size:13px;font-weight:700;color:#1a1a1a;">土</div>
<div class=t style="left:775.23px;top:489.60px;font-size:10.5px;font-weight:400;color:#3a3a3a;transform:scaleX(0.93);">1</div>
<div class=t style="left:797.52px;top:489.60px;font-size:10.5px;font-weight:400;color:#3a3a3a;transform:scaleX(0.93);">2</div>
<div class=t style="left:819.35px;top:489.60px;font-size:10.5px;font-weight:400;color:#3a3a3a;transform:scaleX(0.93);">3</div>
<div class=t style="left:688.37px;top:514.90px;font-size:10.5px;font-weight:400;color:#3a3a3a;transform:scaleX(0.93);">4</div>
<div class=t style="left:710.20px;top:514.90px;font-size:10.5px;font-weight:400;color:#3a3a3a;transform:scaleX(0.93);">5</div>
<div class=t style="left:732.03px;top:514.90px;font-size:10.5px;font-weight:400;color:#3a3a3a;transform:scaleX(0.93);">6</div>
<div class=t style="left:753.86px;top:514.90px;font-size:10.5px;font-weight:400;color:#3a3a3a;transform:scaleX(0.93);">7</div>
<div class=t style="left:775.69px;top:514.90px;font-size:10.5px;font-weight:400;color:#3a3a3a;transform:scaleX(0.93);">8</div>
<div class=t style="left:797.52px;top:514.90px;font-size:10.5px;font-weight:400;color:#3a3a3a;transform:scaleX(0.93);">9</div>
<div class=t style="left:816.10px;top:514.90px;font-size:10.5px;font-weight:400;color:#3a3a3a;transform:scaleX(0.93);">10</div>
<div class=t style="left:685.58px;top:540.20px;font-size:10.5px;font-weight:400;color:#3a3a3a;transform:scaleX(0.93);">11</div>
<div class=t style="left:707.41px;top:540.20px;font-size:10.5px;font-weight:400;color:#3a3a3a;transform:scaleX(0.93);">12</div>
<div class=t style="left:729.24px;top:540.20px;font-size:10.5px;font-weight:400;color:#3a3a3a;transform:scaleX(0.93);">13</div>
<div class=t style="left:750.61px;top:540.20px;font-size:10.5px;font-weight:400;color:#3a3a3a;transform:scaleX(0.93);">14</div>
<div class=t style="left:772.44px;top:540.20px;font-size:10.5px;font-weight:400;color:#3a3a3a;transform:scaleX(0.93);">15</div>
<div class=t style="left:794.73px;top:540.20px;font-size:10.5px;font-weight:400;color:#3a3a3a;transform:scaleX(0.93);">16</div>
<div class=t style="left:816.56px;top:540.20px;font-size:10.5px;font-weight:400;color:#3a3a3a;transform:scaleX(0.93);">17</div>
<div class=t style="left:685.12px;top:565.50px;font-size:10.5px;font-weight:400;color:#3a3a3a;transform:scaleX(0.93);">18</div>
<div class=t style="left:707.41px;top:565.50px;font-size:10.5px;font-weight:400;color:#3a3a3a;transform:scaleX(0.93);">19</div>
<div class=t style="left:729.24px;top:565.50px;font-size:10.5px;font-weight:400;color:#3a3a3a;transform:scaleX(0.93);">20</div>
<div class=t style="left:751.53px;top:565.50px;font-size:10.5px;font-weight:400;color:#3a3a3a;transform:scaleX(0.93);">21</div>
<div class=t style="left:773.37px;top:565.50px;font-size:10.5px;font-weight:400;color:#3a3a3a;transform:scaleX(0.93);">22</div>
<div class=t style="left:795.19px;top:565.50px;font-size:10.5px;font-weight:400;color:#3a3a3a;transform:scaleX(0.93);">23</div>
<div class=t style="left:816.56px;top:565.50px;font-size:10.5px;font-weight:400;color:#3a3a3a;transform:scaleX(0.93);">24</div>
<div class=t style="left:685.58px;top:590.80px;font-size:10.5px;font-weight:400;color:#3a3a3a;transform:scaleX(0.93);">25</div>
<div class=t style="left:707.88px;top:590.80px;font-size:10.5px;font-weight:400;color:#3a3a3a;transform:scaleX(0.93);">26</div>
<div class=t style="left:729.70px;top:590.80px;font-size:10.5px;font-weight:400;color:#3a3a3a;transform:scaleX(0.93);">27</div>
<div class=t style="left:751.07px;top:590.80px;font-size:10.5px;font-weight:400;color:#3a3a3a;transform:scaleX(0.93);">28</div>
<div class=t style="left:773.37px;top:590.80px;font-size:10.5px;font-weight:400;color:#3a3a3a;transform:scaleX(0.93);">29</div>
<div class=t style="left:794.73px;top:590.80px;font-size:10.5px;font-weight:400;color:#3a3a3a;transform:scaleX(0.93);">30</div>
<div class=t style="left:955.45px;top:439.90px;font-size:14px;font-weight:700;color:#1a1a1a;">10月</div>
<div class=t style="left:897.96px;top:466.40px;font-size:13px;font-weight:700;color:#1a1a1a;">日</div>
<div class=t style="left:920.79px;top:466.40px;font-size:13px;font-weight:700;color:#1a1a1a;">月</div>
<div class=t style="left:941.62px;top:466.40px;font-size:13px;font-weight:700;color:#1a1a1a;">火</div>
<div class=t style="left:963.45px;top:466.40px;font-size:13px;font-weight:700;color:#1a1a1a;">水</div>
<div class=t style="left:985.28px;top:466.40px;font-size:13px;font-weight:700;color:#1a1a1a;">木</div>
<div class=t style="left:1007.11px;top:466.40px;font-size:13px;font-weight:700;color:#1a1a1a;">金</div>
<div class=t style="left:1028.94px;top:466.90px;font-size:13px;font-weight:700;color:#1a1a1a;">土</div>
<div class=t style="left:1032.18px;top:489.60px;font-size:10.5px;font-weight:400;color:#3a3a3a;transform:scaleX(0.93);">1</div>
<div class=t style="left:901.67px;top:514.90px;font-size:10.5px;font-weight:400;color:#3a3a3a;transform:scaleX(0.93);">2</div>
<div class=t style="left:923.50px;top:514.90px;font-size:10.5px;font-weight:400;color:#3a3a3a;transform:scaleX(0.93);">3</div>
<div class=t style="left:945.33px;top:514.90px;font-size:10.5px;font-weight:400;color:#3a3a3a;transform:scaleX(0.93);">4</div>
<div class=t style="left:967.16px;top:514.90px;font-size:10.5px;font-weight:400;color:#3a3a3a;transform:scaleX(0.93);">5</div>
<div class=t style="left:988.99px;top:514.90px;font-size:10.5px;font-weight:400;color:#3a3a3a;transform:scaleX(0.93);">6</div>
<div class=t style="left:1010.82px;top:514.90px;font-size:10.5px;font-weight:400;color:#3a3a3a;transform:scaleX(0.93);">7</div>
<div class=t style="left:1032.65px;top:514.90px;font-size:10.5px;font-weight:400;color:#3a3a3a;transform:scaleX(0.93);">8</div>
<div class=t style="left:901.67px;top:540.20px;font-size:10.5px;font-weight:400;color:#3a3a3a;transform:scaleX(0.93);">9</div>
<div class=t style="left:920.25px;top:540.20px;font-size:10.5px;font-weight:400;color:#3a3a3a;transform:scaleX(0.93);">10</div>
<div class=t style="left:942.54px;top:540.20px;font-size:10.5px;font-weight:400;color:#3a3a3a;transform:scaleX(0.93);">11</div>
<div class=t style="left:964.37px;top:540.20px;font-size:10.5px;font-weight:400;color:#3a3a3a;transform:scaleX(0.93);">12</div>
<div class=t style="left:986.20px;top:540.20px;font-size:10.5px;font-weight:400;color:#3a3a3a;transform:scaleX(0.93);">13</div>
<div class=t style="left:1007.57px;top:540.20px;font-size:10.5px;font-weight:400;color:#3a3a3a;transform:scaleX(0.93);">14</div>
<div class=t style="left:1029.39px;top:540.20px;font-size:10.5px;font-weight:400;color:#3a3a3a;transform:scaleX(0.93);">15</div>
<div class=t style="left:898.88px;top:565.50px;font-size:10.5px;font-weight:400;color:#3a3a3a;transform:scaleX(0.93);">16</div>
<div class=t style="left:920.71px;top:565.50px;font-size:10.5px;font-weight:400;color:#3a3a3a;transform:scaleX(0.93);">17</div>
<div class=t style="left:942.08px;top:565.50px;font-size:10.5px;font-weight:400;color:#3a3a3a;transform:scaleX(0.93);">18</div>
<div class=t style="left:964.37px;top:565.50px;font-size:10.5px;font-weight:400;color:#3a3a3a;transform:scaleX(0.93);">19</div>
<div class=t style="left:986.20px;top:565.50px;font-size:10.5px;font-weight:400;color:#3a3a3a;transform:scaleX(0.93);">20</div>
<div class=t style="left:1008.50px;top:565.50px;font-size:10.5px;font-weight:400;color:#3a3a3a;transform:scaleX(0.93);">21</div>
<div class=t style="left:1030.33px;top:565.50px;font-size:10.5px;font-weight:400;color:#3a3a3a;transform:scaleX(0.93);">22</div>
<div class=t style="left:899.35px;top:590.80px;font-size:10.5px;font-weight:400;color:#3a3a3a;transform:scaleX(0.93);">23</div>
<div class=t style="left:920.71px;top:590.80px;font-size:10.5px;font-weight:400;color:#3a3a3a;transform:scaleX(0.93);">24</div>
<div class=t style="left:942.54px;top:590.80px;font-size:10.5px;font-weight:400;color:#3a3a3a;transform:scaleX(0.93);">25</div>
<div class=t style="left:964.84px;top:590.80px;font-size:10.5px;font-weight:400;color:#3a3a3a;transform:scaleX(0.93);">26</div>
<div class=t style="left:986.67px;top:590.80px;font-size:10.5px;font-weight:400;color:#3a3a3a;transform:scaleX(0.93);">27</div>
<div class=t style="left:1008.03px;top:590.80px;font-size:10.5px;font-weight:400;color:#3a3a3a;transform:scaleX(0.93);">28</div>
<div class=t style="left:1030.33px;top:590.80px;font-size:10.5px;font-weight:400;color:#3a3a3a;transform:scaleX(0.93);">29</div>
<div class=t style="left:898.88px;top:616.10px;font-size:10.5px;font-weight:400;color:#3a3a3a;transform:scaleX(0.93);">30</div>
<div class=t style="left:921.18px;top:616.10px;font-size:10.5px;font-weight:400;color:#3a3a3a;transform:scaleX(0.93);">31</div>
<div class=t style="left:1169.25px;top:439.90px;font-size:14px;font-weight:700;color:#1a1a1a;">11月</div>
<div class=t style="left:1111.26px;top:466.40px;font-size:13px;font-weight:700;color:#1a1a1a;">日</div>
<div class=t style="left:1134.09px;top:466.40px;font-size:13px;font-weight:700;color:#1a1a1a;">月</div>
<div class=t style="left:1154.92px;top:466.40px;font-size:13px;font-weight:700;color:#1a1a1a;">火</div>
<div class=t style="left:1176.75px;top:466.40px;font-size:13px;font-weight:700;color:#1a1a1a;">水</div>
<div class=t style="left:1198.58px;top:466.40px;font-size:13px;font-weight:700;color:#1a1a1a;">木</div>
<div class=t style="left:1220.41px;top:466.40px;font-size:13px;font-weight:700;color:#1a1a1a;">金</div>
<div class=t style="left:1242.24px;top:466.90px;font-size:13px;font-weight:700;color:#1a1a1a;">土</div>
<div class=t style="left:1158.17px;top:489.60px;font-size:10.5px;font-weight:400;color:#3a3a3a;transform:scaleX(0.93);">1</div>
<div class=t style="left:1180.46px;top:489.60px;font-size:10.5px;font-weight:400;color:#3a3a3a;transform:scaleX(0.93);">2</div>
<div class=t style="left:1202.29px;top:489.60px;font-size:10.5px;font-weight:400;color:#3a3a3a;transform:scaleX(0.93);">3</div>
<div class=t style="left:1224.12px;top:489.60px;font-size:10.5px;font-weight:400;color:#3a3a3a;transform:scaleX(0.93);">4</div>
<div class=t style="left:1245.95px;top:489.60px;font-size:10.5px;font-weight:400;color:#3a3a3a;transform:scaleX(0.93);">5</div>
<div class=t style="left:1114.97px;top:514.90px;font-size:10.5px;font-weight:400;color:#3a3a3a;transform:scaleX(0.93);">6</div>
<div class=t style="left:1136.80px;top:514.90px;font-size:10.5px;font-weight:400;color:#3a3a3a;transform:scaleX(0.93);">7</div>
<div class=t style="left:1158.63px;top:514.90px;font-size:10.5px;font-weight:400;color:#3a3a3a;transform:scaleX(0.93);">8</div>
<div class=t style="left:1180.46px;top:514.90px;font-size:10.5px;font-weight:400;color:#3a3a3a;transform:scaleX(0.93);">9</div>
<div class=t style="left:1199.04px;top:514.90px;font-size:10.5px;font-weight:400;color:#3a3a3a;transform:scaleX(0.93);">10</div>
<div class=t style="left:1221.33px;top:514.90px;font-size:10.5px;font-weight:400;color:#3a3a3a;transform:scaleX(0.93);">11</div>
<div class=t style="left:1243.16px;top:514.90px;font-size:10.5px;font-weight:400;color:#3a3a3a;transform:scaleX(0.93);">12</div>
<div class=t style="left:1112.18px;top:540.20px;font-size:10.5px;font-weight:400;color:#3a3a3a;transform:scaleX(0.93);">13</div>
<div class=t style="left:1133.55px;top:540.20px;font-size:10.5px;font-weight:400;color:#3a3a3a;transform:scaleX(0.93);">14</div>
<div class=t style="left:1155.38px;top:540.20px;font-size:10.5px;font-weight:400;color:#3a3a3a;transform:scaleX(0.93);">15</div>
<div class=t style="left:1177.67px;top:540.20px;font-size:10.5px;font-weight:400;color:#3a3a3a;transform:scaleX(0.93);">16</div>
<div class=t style="left:1199.50px;top:540.20px;font-size:10.5px;font-weight:400;color:#3a3a3a;transform:scaleX(0.93);">17</div>
<div class=t style="left:1220.87px;top:540.20px;font-size:10.5px;font-weight:400;color:#3a3a3a;transform:scaleX(0.93);">18</div>
<div class=t style="left:1243.16px;top:540.20px;font-size:10.5px;font-weight:400;color:#3a3a3a;transform:scaleX(0.93);">19</div>
<div class=t style="left:1112.18px;top:565.50px;font-size:10.5px;font-weight:400;color:#3a3a3a;transform:scaleX(0.93);">20</div>
<div class=t style="left:1134.48px;top:565.50px;font-size:10.5px;font-weight:400;color:#3a3a3a;transform:scaleX(0.93);">21</div>
<div class=t style="left:1156.31px;top:565.50px;font-size:10.5px;font-weight:400;color:#3a3a3a;transform:scaleX(0.93);">22</div>
<div class=t style="left:1178.14px;top:565.50px;font-size:10.5px;font-weight:400;color:#3a3a3a;transform:scaleX(0.93);">23</div>
<div class=t style="left:1199.50px;top:565.50px;font-size:10.5px;font-weight:400;color:#3a3a3a;transform:scaleX(0.93);">24</div>
<div class=t style="left:1221.33px;top:565.50px;font-size:10.5px;font-weight:400;color:#3a3a3a;transform:scaleX(0.93);">25</div>
<div class=t style="left:1243.63px;top:565.50px;font-size:10.5px;font-weight:400;color:#3a3a3a;transform:scaleX(0.93);">26</div>
<div class=t style="left:1112.65px;top:590.80px;font-size:10.5px;font-weight:400;color:#3a3a3a;transform:scaleX(0.93);">27</div>
<div class=t style="left:1134.01px;top:590.80px;font-size:10.5px;font-weight:400;color:#3a3a3a;transform:scaleX(0.93);">28</div>
<div class=t style="left:1156.31px;top:590.80px;font-size:10.5px;font-weight:400;color:#3a3a3a;transform:scaleX(0.93);">29</div>
<div class=t style="left:1177.67px;top:590.80px;font-size:10.5px;font-weight:400;color:#3a3a3a;transform:scaleX(0.93);">30</div>
<div class=t style="left:1382.05px;top:439.90px;font-size:14px;font-weight:700;color:#1a1a1a;">12月</div>
<div class=t style="left:1324.56px;top:466.40px;font-size:13px;font-weight:700;color:#1a1a1a;">日</div>
<div class=t style="left:1347.39px;top:466.40px;font-size:13px;font-weight:700;color:#1a1a1a;">月</div>
<div class=t style="left:1368.22px;top:466.40px;font-size:13px;font-weight:700;color:#1a1a1a;">火</div>
<div class=t style="left:1390.05px;top:466.40px;font-size:13px;font-weight:700;color:#1a1a1a;">水</div>
<div class=t style="left:1411.88px;top:466.40px;font-size:13px;font-weight:700;color:#1a1a1a;">木</div>
<div class=t style="left:1433.71px;top:466.40px;font-size:13px;font-weight:700;color:#1a1a1a;">金</div>
<div class=t style="left:1455.54px;top:466.90px;font-size:13px;font-weight:700;color:#1a1a1a;">土</div>
<div class=t style="left:1415.12px;top:489.60px;font-size:10.5px;font-weight:400;color:#3a3a3a;transform:scaleX(0.93);">1</div>
<div class=t style="left:1437.42px;top:489.60px;font-size:10.5px;font-weight:400;color:#3a3a3a;transform:scaleX(0.93);">2</div>
<div class=t style="left:1459.25px;top:489.60px;font-size:10.5px;font-weight:400;color:#3a3a3a;transform:scaleX(0.93);">3</div>
<div class=t style="left:1328.27px;top:514.90px;font-size:10.5px;font-weight:400;color:#3a3a3a;transform:scaleX(0.93);">4</div>
<div class=t style="left:1350.10px;top:514.90px;font-size:10.5px;font-weight:400;color:#3a3a3a;transform:scaleX(0.93);">5</div>
<div class=t style="left:1371.93px;top:514.90px;font-size:10.5px;font-weight:400;color:#3a3a3a;transform:scaleX(0.93);">6</div>
<div class=t style="left:1393.76px;top:514.90px;font-size:10.5px;font-weight:400;color:#3a3a3a;transform:scaleX(0.93);">7</div>
<div class=t style="left:1415.59px;top:514.90px;font-size:10.5px;font-weight:400;color:#3a3a3a;transform:scaleX(0.93);">8</div>
<div class=t style="left:1437.42px;top:514.90px;font-size:10.5px;font-weight:400;color:#3a3a3a;transform:scaleX(0.93);">9</div>
<div class=t style="left:1456.00px;top:514.90px;font-size:10.5px;font-weight:400;color:#3a3a3a;transform:scaleX(0.93);">10</div>
<div class=t style="left:1325.48px;top:540.20px;font-size:10.5px;font-weight:400;color:#3a3a3a;transform:scaleX(0.93);">11</div>
<div class=t style="left:1347.31px;top:540.20px;font-size:10.5px;font-weight:400;color:#3a3a3a;transform:scaleX(0.93);">12</div>
<div class=t style="left:1369.14px;top:540.20px;font-size:10.5px;font-weight:400;color:#3a3a3a;transform:scaleX(0.93);">13</div>
<div class=t style="left:1390.51px;top:540.20px;font-size:10.5px;font-weight:400;color:#3a3a3a;transform:scaleX(0.93);">14</div>
<div class=t style="left:1412.34px;top:540.20px;font-size:10.5px;font-weight:400;color:#3a3a3a;transform:scaleX(0.93);">15</div>
<div class=t style="left:1434.63px;top:540.20px;font-size:10.5px;font-weight:400;color:#3a3a3a;transform:scaleX(0.93);">16</div>
<div class=t style="left:1456.46px;top:540.20px;font-size:10.5px;font-weight:400;color:#3a3a3a;transform:scaleX(0.93);">17</div>
<div class=t style="left:1325.02px;top:565.50px;font-size:10.5px;font-weight:400;color:#3a3a3a;transform:scaleX(0.93);">18</div>
<div class=t style="left:1347.31px;top:565.50px;font-size:10.5px;font-weight:400;color:#3a3a3a;transform:scaleX(0.93);">19</div>
<div class=t style="left:1369.14px;top:565.50px;font-size:10.5px;font-weight:400;color:#3a3a3a;transform:scaleX(0.93);">20</div>
<div class=t style="left:1391.44px;top:565.50px;font-size:10.5px;font-weight:400;color:#3a3a3a;transform:scaleX(0.93);">21</div>
<div class=t style="left:1413.27px;top:565.50px;font-size:10.5px;font-weight:400;color:#3a3a3a;transform:scaleX(0.93);">22</div>
<div class=t style="left:1435.10px;top:565.50px;font-size:10.5px;font-weight:400;color:#3a3a3a;transform:scaleX(0.93);">23</div>
<div class=t style="left:1456.46px;top:565.50px;font-size:10.5px;font-weight:400;color:#3a3a3a;transform:scaleX(0.93);">24</div>
<div class=t style="left:1325.48px;top:590.80px;font-size:10.5px;font-weight:400;color:#3a3a3a;transform:scaleX(0.93);">25</div>
<div class=t style="left:1347.78px;top:590.80px;font-size:10.5px;font-weight:400;color:#3a3a3a;transform:scaleX(0.93);">26</div>
<div class=t style="left:1369.61px;top:590.80px;font-size:10.5px;font-weight:400;color:#3a3a3a;transform:scaleX(0.93);">27</div>
<div class=t style="left:1390.97px;top:590.80px;font-size:10.5px;font-weight:400;color:#3a3a3a;transform:scaleX(0.93);">28</div>
<div class=t style="left:1413.27px;top:590.80px;font-size:10.5px;font-weight:400;color:#3a3a3a;transform:scaleX(0.93);">29</div>
<div class=t style="left:1434.63px;top:590.80px;font-size:10.5px;font-weight:400;color:#3a3a3a;transform:scaleX(0.93);">30</div>
<div class=t style="left:1456.93px;top:590.80px;font-size:10.5px;font-weight:400;color:#3a3a3a;transform:scaleX(0.93);">31</div>
</body></html>
